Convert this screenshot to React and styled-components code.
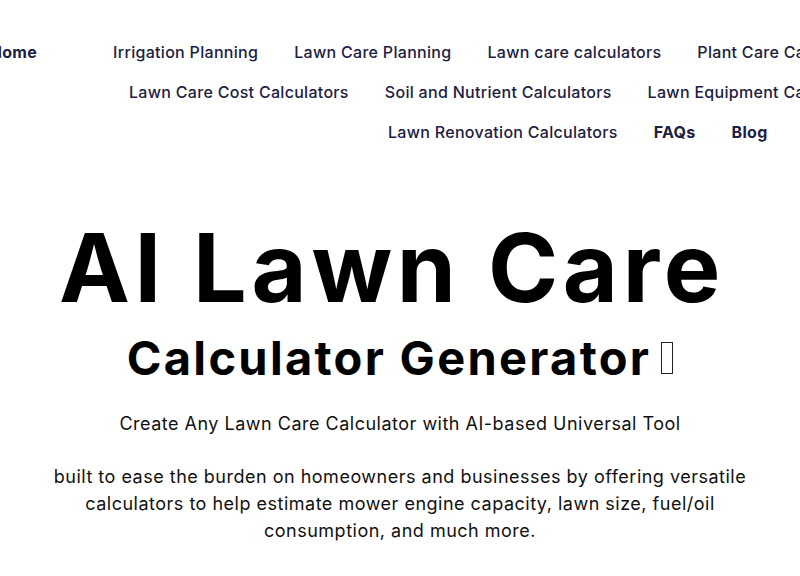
import React from "react";
import styled, { createGlobalStyle } from "styled-components";

const GlobalStyle = createGlobalStyle`
  html, body {
    margin: 0;
    padding: 0;
    background: #ffffff;
    overflow: hidden;
  }
  body {
    font-family: "Inter", "Open Sans", sans-serif;
  }
`;

const navRows = [
  {
    offset: -10,
    items: [
      { label: "Home", bold: true, wide: true },
      { label: "Irrigation Planning" },
      { label: "Lawn Care Planning" },
      { label: "Lawn care calculators" },
      { label: "Plant Care Calculators" },
    ],
  },
  {
    offset: 129,
    items: [
      { label: "Lawn Care Cost Calculators" },
      { label: "Soil and Nutrient Calculators" },
      { label: "Lawn Equipment Calculators" },
    ],
  },
  {
    offset: 388,
    items: [
      { label: "Lawn Renovation Calculators" },
      { label: "FAQs", bold: true },
      { label: "Blog", bold: true },
    ],
  },
];

export default function App() {
  return (
    <>
      <GlobalStyle />
      <Page>
        <Nav>
          {navRows.map((row, i) => (
            <NavRow key={i} offset={row.offset}>
              {row.items.map((item) => (
                <NavLink key={item.label} href="#" bold={item.bold} wide={item.wide}>
                  {item.label}
                </NavLink>
              ))}
            </NavRow>
          ))}
        </Nav>

        <Hero>
          <Title>AI Lawn Care</Title>
          <Subtitle>
            Calculator Generator <Tofu />
          </Subtitle>
          <Lead>Create Any Lawn Care Calculator with AI-based Universal Tool</Lead>
          <Description>
            built to ease the burden on homeowners and businesses by offering versatile
            calculators to help estimate mower engine capacity, lawn size, fuel/oil
            consumption, and much more.
          </Description>
        </Hero>
      </Page>
    </>
  );
}

// Styled Components

const Page = styled.div`
  width: 800px;
  height: 576px;
  overflow: hidden;
`;

const Nav = styled.nav`
  padding-top: 32px;
  display: flex;
  flex-direction: column;
`;

const NavRow = styled.div`
  display: flex;
  gap: 36px;
  height: 40px;
  align-items: center;
  white-space: nowrap;
  margin-left: ${(props) => props.offset}px;
`;

const NavLink = styled.a`
  font-family: "Inter", sans-serif;
  font-size: 16px;
  letter-spacing: 0.3px;
  font-weight: ${(props) => (props.bold ? 700 : 500)};
  color: #1c2043;
  text-decoration: none;
  margin-right: ${(props) => (props.wide ? "40px" : "0")};
`;

const Hero = styled.section`
  display: flex;
  flex-direction: column;
  align-items: center;
  text-align: center;
  padding-top: 66px;
`;

const Title = styled.h1`
  margin: 0;
  padding-right: 16px;
  font-family: "Inter", sans-serif;
  font-size: 95px;
  font-weight: 700;
  line-height: 100px;
  color: #000000;
  letter-spacing: 4.7px;
`;

const Subtitle = styled.h2`
  margin: 10px 0 0;
  font-family: "Inter", sans-serif;
  font-size: 47px;
  font-weight: 700;
  line-height: 60px;
  letter-spacing: 2.3px;
  color: #000000;
  display: flex;
  align-items: center;
  gap: 10px;
`;

const Tofu = styled.span`
  display: inline-block;
  width: 10px;
  height: 30px;
  border: 1.5px solid #222;
`;

const Lead = styled.p`
  margin: 22px 0 0;
  font-family: "Inter", sans-serif;
  font-size: 18px;
  line-height: 28px;
  letter-spacing: 0.5px;
  color: #111111;
`;

const Description = styled.p`
  margin: 25px 0 0;
  max-width: 710px;
  font-family: "Inter", sans-serif;
  font-size: 18px;
  line-height: 27px;
  letter-spacing: 0.5px;
  color: #111111;
`;
